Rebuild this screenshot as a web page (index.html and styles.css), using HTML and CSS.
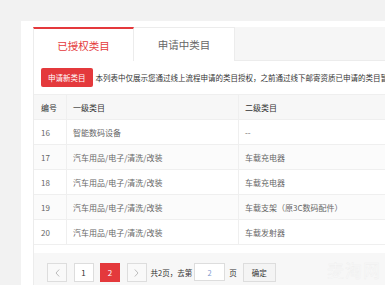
FILE: index.html
```html
<!DOCTYPE html>
<html lang="zh-CN">
<head>
<meta charset="utf-8">
<title>类目管理</title>
<link rel="stylesheet" href="styles.css">
</head>
<body>
<div class="card">
  <div class="tabs">
    <div class="tab active">已授权类目</div>
    <div class="tab">申请中类目</div>
  </div>
  <div class="panel">
    <div class="toolbar">
      <button class="btn-apply">申请新类目</button>
      <span class="notice">本列表中仅展示您通过线上流程申请的类目授权，之前通过线下邮寄资质已申请的类目暂不展示</span>
    </div>
    <table class="grid">
      <thead>
        <tr><th class="c-no">编号</th><th class="c-one">一级类目</th><th class="c-two">二级类目</th></tr>
      </thead>
      <tbody>
        <tr><td>16</td><td>智能数码设备</td><td>--</td></tr>
        <tr class="alt"><td>17</td><td>汽车用品/电子/清洗/改装</td><td>车载充电器</td></tr>
        <tr><td>18</td><td>汽车用品/电子/清洗/改装</td><td>车载充电器</td></tr>
        <tr class="alt"><td>19</td><td>汽车用品/电子/清洗/改装</td><td>车载支架（原3C数码配件）</td></tr>
        <tr><td>20</td><td>汽车用品/电子/清洗/改装</td><td>车载发射器</td></tr>
      </tbody>
    </table>
    <div class="pager">
      <span class="pg disabled"><svg width="5" height="8" viewBox="0 0 5 8"><path d="M4.2 0.5 L1 4 L4.2 7.5" fill="none" stroke="#b5b5b5" stroke-width="0.9"/></svg></span>
      <span class="pg">1</span>
      <span class="pg current">2</span>
      <span class="pg disabled"><svg width="5" height="8" viewBox="0 0 5 8"><path d="M0.8 0.5 L4 4 L0.8 7.5" fill="none" stroke="#b5b5b5" stroke-width="0.9"/></svg></span>
      <span class="pg-text">共2页，去第</span>
      <span class="pg-input">2</span>
      <span class="pg-text">页</span>
      <span class="pg-ok">确定</span>
    </div>
  </div>
</div>
<div class="watermark">麦淘网</div>
</body>
</html>
```

FILE: styles.css
```css
html, body {
  margin: 0;
  padding: 0;
}
body {
  width: 385px;
  height: 285px;
  overflow: hidden;
  background: #f2f2f2;
  font-family: "Noto Sans CJK SC", "Noto Sans", sans-serif;
  color: #333;
  position: relative;
}
.card {
  margin: 21px 0 0 21px;
  width: 520px;
  height: 300px;
  background: #fff;
  padding: 6px 0 0 12px;
  box-sizing: border-box;
}
.tabs {
  display: flex;
  height: 34px;
  background: #f6f6f6;
  border-bottom: 1px solid #ececec;
  box-sizing: border-box;
}
.tab {
  width: 101px;
  height: 34px;
  box-sizing: border-box;
  background: #fff;
  border: 1px solid #ececec;
  border-bottom: none;
  border-left: none;
  font-size: 10.5px;
  color: #666;
  display: flex;
  align-items: center;
  justify-content: center;
}
.tab.active {
  border-left: 1px solid #ececec;
  border-top: 2px solid #e4393c;
  color: #e4393c;
  height: 34px;
  margin-bottom: -1px;
}
.panel {
  border-left: 1px solid #ececec;
}
.toolbar {
  display: flex;
  align-items: center;
  gap: 3px;
  padding: 7px 0 0 7px;
  white-space: nowrap;
}
.btn-apply {
  height: 19px;
  padding: 0 7px;
  border: none;
  border-radius: 2px;
  background: #e4393c;
  color: #fff;
  font-family: inherit;
  font-size: 7.5px;
  line-height: 19px;
}
.notice {
  font-size: 7.5px;
  color: #333;
}
.grid {
  margin-top: 7px;
  border-collapse: collapse;
  width: 480px;
  font-size: 8px;
}
.grid th, .grid td {
  height: 24px;
  padding: 0 6px;
  text-align: left;
  border-top: 1px solid #efefef;
  border-bottom: 1px solid #efefef;
  border-left: 1px solid #efefef;
  color: #666;
  font-weight: normal;
}
.grid th {
  background: #f7f7f7;
  color: #333;
}
.grid tr th:first-child, .grid tr td:first-child {
  border-left: none;
  padding-left: 7px;
}
.grid .c-no { width: 19px; }
.grid .c-one { width: 159px; }
.grid tr.alt td { background: #fbfbfb; }
.pager {
  margin-top: 8px;
  height: 40px;
  background: #f7f7f7;
  display: flex;
  align-items: flex-start;
  padding: 10px 0 0 13px;
  box-sizing: border-box;
  font-size: 7.5px;
  color: #333;
}
.pg {
  width: 20px;
  height: 19px;
  box-sizing: border-box;
  background: #fff;
  border: 1px solid #ddd;
  display: flex;
  align-items: center;
  justify-content: center;
  font-size: 8px;
  color: #333;
  margin-right: 6.5px;
}
.pg.disabled {
  background: #f9f9f9;
}
.pg.current {
  background: #e4393c;
  border-color: #e4393c;
  color: #fff;
}
.pg-text {
  height: 19px;
  line-height: 19px;
  margin-left: -2.5px;
  margin-right: 2px;
}
.pg-input {
  width: 31px;
  height: 18px;
  box-sizing: border-box;
  background: #fff;
  border: 1px solid #ddd;
  display: flex;
  align-items: center;
  justify-content: center;
  font-size: 7.5px;
  color: #7f9bd0;
  margin-right: 4px;
}
.pg-input + .pg-text {
  margin-left: 0;
  margin-right: 6px;
}
.pg-ok {
  width: 33px;
  height: 19px;
  box-sizing: border-box;
  background: #f4f4f4;
  border: 1px solid #ddd;
  display: flex;
  align-items: center;
  justify-content: center;
  font-size: 7.5px;
  color: #333;
}
.watermark {
  position: absolute;
  left: 327px;
  top: 257px;
  font-size: 17px;
  letter-spacing: 1px;
  color: rgba(255, 255, 255, 0.35);
  -webkit-text-stroke: 0.4px rgba(232, 232, 232, 0.6);
  pointer-events: none;
}
```
